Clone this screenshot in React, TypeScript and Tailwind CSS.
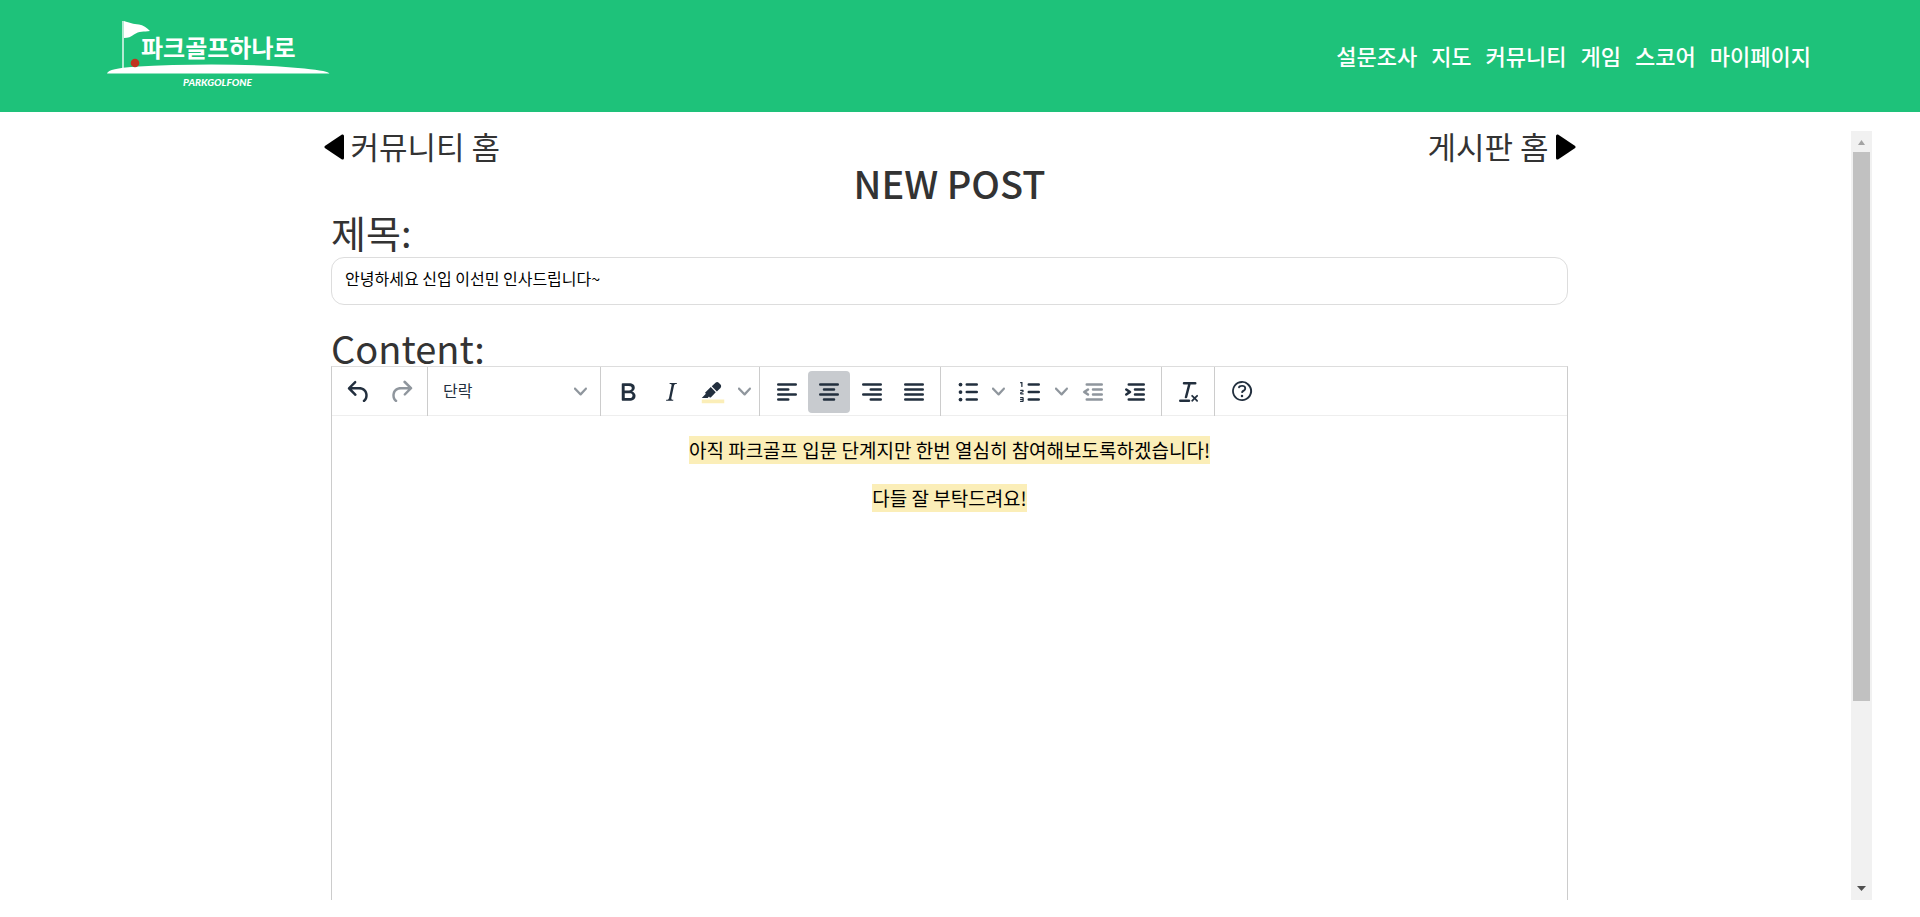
import type { ReactNode } from "react";

const NAV_ITEMS = ["설문조사", "지도", "커뮤니티", "게임", "스코어", "마이페이지"];

function Logo() {
  return (
    <svg viewBox="0 0 224 72" className="h-18 w-56" role="img" aria-label="파크골프하나로">
      <rect x="16" y="1" width="2" height="47" fill="#b4ebd3" />
      <path d="M18 1C24 3 27 4 33 4.500C37 5 41 8 44 11C38 12 33 11 28 14.500C25 17 22 18 18 18Z" fill="#fff" />
      <path d="M1 53.500C2 50 12 48 28 46.800C84 43.500 140 43.500 192 48C210 49.500 221 51 223.500 53.500Z" fill="#fff" />
      <circle cx="29" cy="43" r="4.300" fill="#c0331f" />
      <text x="35" y="37" fill="#fff" className="font-['Noto_Sans_CJK_KR',sans-serif] text-[24px] font-bold">
        파크골프하나로
      </text>
      <text x="77" y="66" fill="#fff" className="font-['Lato',sans-serif] text-[10px] font-black italic">
        PARKGOLFONE
      </text>
    </svg>
  );
}

function Icon({ children }: { children: ReactNode }) {
  return (
    <svg viewBox="0 0 24 24" className="size-[30px] shrink-0" fill="currentColor" aria-hidden="true">
      {children}
    </svg>
  );
}

function Lines({ d }: { d: string }) {
  return <path d={d} fill="none" stroke="currentColor" strokeWidth="2" strokeLinecap="round" />;
}

function Chevron() {
  return (
    <svg viewBox="0 0 10 10" className="size-[13px] shrink-0 opacity-50" fill="currentColor" aria-hidden="true">
      <path d="M8.700 2.200c.3-.3.8-.3 1 0 .4.4.4.9 0 1.200L5.700 7.800c-.3.3-.9.3-1.200 0L.2 3.400a.8.8 0 010-1.200c.3-.3.8-.3 1.100 0L5 6l3.700-3.800z" />
    </svg>
  );
}

function ToolButton({
  label,
  active = false,
  disabled = false,
  children,
}: {
  label: string;
  active?: boolean;
  disabled?: boolean;
  children: ReactNode;
}) {
  return (
    <button
      type="button"
      aria-label={label}
      aria-pressed={active}
      disabled={disabled}
      className={`flex h-[42px] min-w-0 flex-1 items-center justify-center rounded-[4px] pl-px ${
        active ? "bg-[#c8cbcf]" : ""
      } ${disabled ? "opacity-50" : ""}`}
    >
      <Icon>{children}</Icon>
    </button>
  );
}

function MoreButton({ label }: { label: string }) {
  return (
    <button type="button" aria-label={label} className="flex h-[42px] w-5 shrink-0 items-center justify-center">
      <Chevron />
    </button>
  );
}

function Group({ width, children }: { width: string; children: ReactNode }) {
  return <div className={`flex h-[49px] items-center border-r border-[#ccc] px-[5px] ${width}`}>{children}</div>;
}

function Toolbar() {
  return (
    <div role="toolbar" className="flex h-[49px] border-b border-[#eee] text-[#222f3e]">
      <Group width="w-24">
        <ToolButton label="실행 취소">
          <path d="M6.400 8H12c3.700 0 6.200 2 6.800 5.100.6 2.700-.4 5.600-2.300 6.800a1 1 0 01-1-1.800c1.100-.6 1.800-2.700 1.400-4.600-.5-2.100-2.100-3.500-4.900-3.500H6.400l3.300 3.300a1 1 0 11-1.400 1.400l-5-5a1 1 0 010-1.400l5-5a1 1 0 011.400 1.400L6.400 8z" />
        </ToolButton>
        <ToolButton label="다시 실행" disabled>
          <path d="M17.600 10H12c-2.800 0-4.400 1.400-4.900 3.500-.4 2 .3 4 1.400 4.600a1 1 0 11-1 1.800c-2-1.200-2.900-4.100-2.300-6.800.6-3 3-5.100 6.800-5.100h5.600l-3.300-3.300a1 1 0 111.400-1.400l5 5a1 1 0 010 1.400l-5 5a1 1 0 01-1.400-1.400l3.300-3.300z" />
        </ToolButton>
      </Group>
      <Group width="w-[173px]">
        <button
          type="button"
          className="flex h-[42px] flex-1 items-center justify-between pr-2 pl-[10px] text-[16px] leading-6"
        >
          <span className="pb-[3px]">단락</span>
          <Chevron />
        </button>
      </Group>
      <Group width="w-[159px]">
        <ToolButton label="굵게">
          <path d="M7.800 19c-.3 0-.5 0-.6-.2l-.2-.5V5.700c0-.2 0-.4.2-.5l.6-.2h5c1.500 0 2.700.3 3.500 1 .7.6 1.100 1.400 1.100 2.500a3 3 0 01-.6 1.900c-.4.6-1 1-1.600 1.200.4.1.9.3 1.300.6s.8.7 1 1.200c.4.4.5 1 .5 1.600 0 1.300-.4 2.300-1.300 3-.8.7-2.100 1-3.800 1H7.800zm5-8.300c.6 0 1.200-.1 1.600-.5.4-.3.6-.7.6-1.300 0-1.100-.8-1.700-2.300-1.700H9.300v3.500h3.400zm.5 6c.7 0 1.300-.1 1.700-.4.4-.4.6-.9.6-1.500s-.2-1-.7-1.400c-.4-.3-1-.4-2-.4H9.400v3.800h4z" />
        </ToolButton>
        <ToolButton label="기울임꼴">
          <path d="M16.700 4.700l-.1.9h-.3c-.6 0-1 0-1.400.3-.3.3-.4.6-.5 1.100l-2.100 9.800v.6c0 .5.4.8 1.400.8h.2l-.2.8H8l.2-.8h.2c1.100 0 1.800-.5 2-1.500l2-9.800.1-.5c0-.6-.4-.8-1.400-.8h-.3l.2-.9h5.800z" />
        </ToolButton>
        <ToolButton label="배경색">
          <path d="M3 18h18v3H3z" fill="#fbeeb8" />
          <path d="M7.700 16.700H3l3.300-3.300-.7-.8L10.200 8l4 4.100-4 4.200c-.2.2-.6.2-.8 0l-.6-.7-1.100 1.100zm5-7.500L11 7.400l3-2.900a2 2 0 012.600 0L18 6c.7.7.7 2 0 2.700l-2.900 2.900-1.800-1.800-.5-.6" />
        </ToolButton>
        <MoreButton label="배경색 선택" />
      </Group>
      <Group width="w-[181px]">
        <ToolButton label="왼쪽 맞춤">
          <Lines d="M5 6h14M5 10h8M5 14h14M5 18h8" />
        </ToolButton>
        <ToolButton label="가운데 맞춤" active>
          <Lines d="M5 6h14M8 10h8M5 14h14M8 18h8" />
        </ToolButton>
        <ToolButton label="오른쪽 맞춤">
          <Lines d="M5 6h14M11 10h8M5 14h14M11 18h8" />
        </ToolButton>
        <ToolButton label="양쪽 맞춤">
          <Lines d="M5 6h14M5 10h14M5 14h14M5 18h14" />
        </ToolButton>
      </Group>
      <Group width="w-[221px]">
        <ToolButton label="글머리 기호">
          <Lines d="M11 6h8M11 12h8M11 18h8" />
          <circle cx="6" cy="6" r="1.500" />
          <circle cx="6" cy="12" r="1.500" />
          <circle cx="6" cy="18" r="1.500" />
        </ToolButton>
        <MoreButton label="글머리 기호 종류" />
        <ToolButton label="번호 매기기">
          <Lines d="M11 6h8M11 12h8M11 18h8" />
          <path d="M6 4v3.500c0 .3-.2.5-.5.5a.5.5 0 01-.5-.5V5h-.5a.5.5 0 010-1H6zm-1 8.800l.2.2h1.300c.3 0 .5.2.5.5s-.2.5-.5.5H4.900a1 1 0 01-.9-1V13c0-.4.3-.8.6-1l1.200-.4.2-.3a.2.2 0 00-.2-.2H4.500a.5.5 0 01-.5-.5c0-.3.2-.5.5-.5h1.600c.5 0 .9.4.9 1v.1c0 .4-.3.8-.6 1l-1.200.4-.2.3zM7 17v2c0 .6-.4 1-1 1H4.500a.5.5 0 010-1h1.200c.2 0 .3-.1.3-.3 0-.2-.1-.3-.3-.3H4.400a.4.4 0 110-.8h1.300c.2 0 .3-.1.3-.3 0-.2-.1-.3-.3-.3H4.500a.5.5 0 110-1H6c.6 0 1 .4 1 1z" />
        </ToolButton>
        <MoreButton label="번호 종류" />
        <ToolButton label="내어쓰기" disabled>
          <Lines d="M7 6h12M12 10h7M12 14h7M7 18h12" />
          <path d="M8.600 13.200a1 1 0 01-1.200 1.600l-3-2a1 1 0 010-1.600l3-2a1 1 0 011.200 1.600L6.800 12l1.800 1.200z" />
        </ToolButton>
        <ToolButton label="들여쓰기">
          <Lines d="M7 6h12M12 10h7M12 14h7M7 18h12" />
          <path d="M4.400 13.200L6.200 12l-1.800-1.200a1 1 0 011.200-1.600l3 2a1 1 0 010 1.600l-3 2a1 1 0 11-1.200-1.600z" />
        </ToolButton>
      </Group>
      <Group width="w-[53px]">
        <ToolButton label="서식 지우기">
          <path d="M13.200 6a1 1 0 010 .2l-2.600 10a1 1 0 01-1 .8h-.2a.8.8 0 01-.8-1l2.600-10H8a1 1 0 110-2h9a1 1 0 010 2h-3.800zM5 18h7a1 1 0 010 2H5a1 1 0 010-2zm13 1.500L16.500 18 15 19.500a.7.7 0 01-1-1l1.500-1.500-1.500-1.500a.7.7 0 011-1l1.500 1.500 1.500-1.500a.7.7 0 011 1L17.500 17l1.500 1.500a.7.7 0 01-1 1z" />
        </ToolButton>
      </Group>
      <div className="flex w-[53px] items-center px-[5px]">
        <ToolButton label="도움말">
          <path
            fillRule="evenodd"
            d="M12 5.500a6.500 6.500 0 00-6 9 6.300 6.300 0 001.400 2l1 1a6.300 6.300 0 003.600 1 6.500 6.500 0 006-9 6.300 6.300 0 00-1.400-2l-1-1a6.300 6.300 0 00-3.600-1zM12 4a7.800 7.800 0 015.700 2.300A8 8 0 1112 4z"
          />
          <path d="M9.600 9.700a.7.7 0 01-.7-.8c0-1.100 1.500-1.800 3.200-1.800 1.800 0 3.200.8 3.200 2.400 0 1.400-.4 2.100-1.500 2.800-.2 0-.3.1-.3.2a2 2 0 00-.8.8.8.8 0 01-1.400-.6c.3-.7.8-1 1.300-1.500l.4-.2c.7-.4.8-.6.8-1.500 0-.5-.6-.9-1.700-.9-.5 0-1 .1-1.400.3-.2 0-.3.1-.3.2v-.2c0 .4-.4.8-.8.8z" />
          <circle cx="12" cy="16" r="1" />
        </ToolButton>
      </div>
    </div>
  );
}

function ScrollRail() {
  return (
    <div className="flex w-[21px] shrink-0 flex-col items-center bg-[#f1f1f1]" aria-hidden="true">
      <div className="flex h-[21px] items-center justify-center pt-[2px]">
        <svg viewBox="0 0 9 5" className="h-[5px] w-[9px]" fill="#a3a3a3">
          <path d="M4.500 0L8 5H1Z" />
        </svg>
      </div>
      <div className="flex w-full flex-1 flex-col px-[2px]">
        <div className="h-[75.5%] bg-[#c1c1c1]" />
      </div>
      <div className="flex h-[21px] items-center justify-center pb-[2px]">
        <svg viewBox="0 0 9 5" className="h-[5px] w-[9px]" fill="#505050">
          <path d="M0 0H9L4.500 5Z" />
        </svg>
      </div>
    </div>
  );
}

export default function App() {
  return (
    <div className="flex h-screen flex-col overflow-hidden bg-white font-['Noto_Sans_CJK_KR',sans-serif] text-[#333]">
      <header className="flex h-28 shrink-0 items-center justify-between bg-[#1ec27a] pr-[109px] pl-[106px]">
        <a href="#home" className="block">
          <Logo />
        </a>
        <nav className="flex gap-[14px] pb-[2px] text-[22px] leading-8 font-medium text-white">
          {NAV_ITEMS.map((item) => (
            <a key={item} href={`#${item}`}>
              {item}
            </a>
          ))}
        </nav>
      </header>

      <div className="mx-12 mt-[19px] mb-[17px] flex min-h-0 flex-1">
        <main className="flex min-w-0 flex-1 flex-col items-center">
          <nav className="flex h-8 w-full max-w-[1252px] shrink-0 items-center justify-between text-[31px] leading-8">
            <a href="#community" className="flex items-center gap-[7px]">
              <svg viewBox="0 0 20 26" className="h-[26px] w-5" aria-hidden="true">
                <path d="M18 0.500Q20 0 20 2V24Q20 26 18 25.500L0.800 14Q0 13 0.800 12Z" />
              </svg>
              <span className="pb-[2px]">커뮤니티 홈</span>
            </a>
            <a href="#board" className="flex items-center gap-[7px]">
              <span className="pb-[2px]">게시판 홈</span>
              <svg viewBox="0 0 20 26" className="h-[26px] w-5" aria-hidden="true">
                <path d="M2 0.500Q0 0 0 2V24Q0 26 2 25.500L19.200 14Q20 13 19.200 12Z" />
              </svg>
            </a>
          </nav>

          <form className="flex min-h-0 w-full max-w-[1237px] flex-1 flex-col">
            <h1 className="mb-1 text-center text-[38px] leading-[40px] font-medium">NEW POST</h1>
            <label htmlFor="title" className="text-[38px] leading-[50px]">
              제목:
            </label>
            <input
              id="title"
              type="text"
              defaultValue="안녕하세요 신입 이선민 인사드립니다~"
              className="h-12 w-full shrink-0 rounded-[13px] border border-[#ddd] px-[13px] pb-[6px] text-[16px] text-black outline-none"
            />
            <span id="content-label" className="mt-6 text-[38px] leading-[37px]">
              Content:
            </span>
            <div className="flex min-h-0 flex-1 flex-col border border-b-0 border-x-[#ccc] border-t-[#ddd]">
              <Toolbar />
              <div
                role="textbox"
                aria-multiline="true"
                aria-labelledby="content-label"
                className="flex flex-1 flex-col items-center gap-5 pt-5 text-center text-[19px] leading-7 text-black"
              >
                <p className="bg-[#fbeeb8]">아직 파크골프 입문 단계지만 한번 열심히 참여해보도록하겠습니다!</p>
                <p className="bg-[#fbeeb8]">다들 잘 부탁드려요!</p>
              </div>
            </div>
          </form>
        </main>
        <ScrollRail />
      </div>
    </div>
  );
}
